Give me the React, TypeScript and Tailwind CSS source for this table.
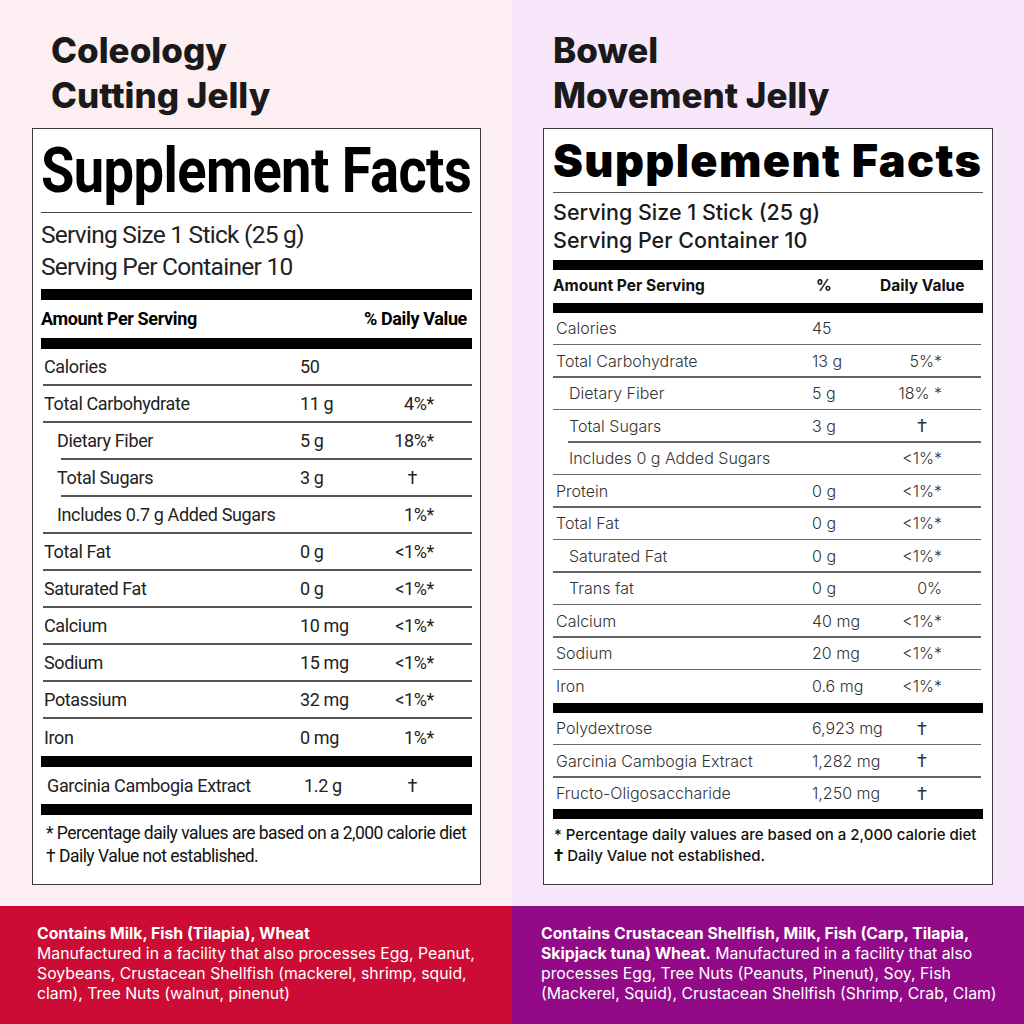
import React from "react";

type Row = { name: string; amount?: string; dv?: string; indent?: boolean; lineIndent?: boolean; last?: boolean };

const leftRows: Row[] = [
  { name: "Calories", amount: "50" },
  { name: "Total Carbohydrate", amount: "11 g", dv: "4%*" },
  { name: "Dietary Fiber", amount: "5 g", dv: "18%*", indent: true, lineIndent: true },
  { name: "Total Sugars", amount: "3 g", dv: "†", indent: true, lineIndent: true },
  { name: "Includes 0.7 g Added Sugars", dv: "1%*", indent: true },
  { name: "Total Fat", amount: "0 g", dv: "<1%*" },
  { name: "Saturated Fat", amount: "0 g", dv: "<1%*" },
  { name: "Calcium", amount: "10 mg", dv: "<1%*" },
  { name: "Sodium", amount: "15 mg", dv: "<1%*" },
  { name: "Potassium", amount: "32 mg", dv: "<1%*" },
  { name: "Iron", amount: "0 mg", dv: "1%*", last: true },
];

const rightRows: Row[] = [
  { name: "Calories", amount: "45" },
  { name: "Total Carbohydrate", amount: "13 g", dv: "5%*" },
  { name: "Dietary Fiber", amount: "5 g", dv: "18% *", indent: true },
  { name: "Total Sugars", amount: "3 g", dv: "†", indent: true, lineIndent: true },
  { name: "Includes 0 g Added Sugars", dv: "<1%*", indent: true },
  { name: "Protein", amount: "0 g", dv: "<1%*" },
  { name: "Total Fat", amount: "0 g", dv: "<1%*" },
  { name: "Saturated Fat", amount: "0 g", dv: "<1%*", indent: true },
  { name: "Trans fat", amount: "0 g", dv: "0%", indent: true },
  { name: "Calcium", amount: "40 mg", dv: "<1%*" },
  { name: "Sodium", amount: "20 mg", dv: "<1%*" },
  { name: "Iron", amount: "0.6 mg", dv: "<1%*", last: true },
];

const rightExtra: Row[] = [
  { name: "Polydextrose", amount: "6,923 mg", dv: "†" },
  { name: "Garcinia Cambogia Extract", amount: "1,282 mg", dv: "†" },
  { name: "Fructo-Oligosaccharide", amount: "1,250 mg", dv: "†", last: true },
];

const roboto = { fontFamily: "Roboto, 'Liberation Sans', sans-serif" };
const inter = { fontFamily: "Inter, 'Liberation Sans', sans-serif" };

function LeftRow({ r }: { r: Row }) {
  return (
    <div className="flex flex-col h-[37px]">
      <div className="flex flex-1 items-center text-[18px] text-[#222] tracking-[-0.02em] whitespace-nowrap">
        <div className={`w-[259px] ${r.indent ? "pl-[16px]" : "pl-[3px]"}`}>{r.name}</div>
        <div className="w-[80px]">{r.amount}</div>
        <div className={`w-[54px] text-right ${r.dv === "†" ? "pr-[17px]" : ""}`}>{r.dv}</div>
      </div>
      {!r.last && <div className={`h-[1.5px] bg-[#555] ${r.lineIndent ? "ml-[20px]" : "ml-[2px]"}`} />}
    </div>
  );
}

function RightRow({ r, h = "h-[32.5px]" }: { r: Row; h?: string }) {
  return (
    <div className={`flex flex-col ${h}`}>
      <div className="flex flex-1 items-center text-[16px] font-light text-[#333] whitespace-nowrap">
        <div className={`w-[259px] ${r.indent ? "pl-[16px]" : "pl-[3px]"}`}>{r.name}</div>
        <div className="w-[76px]">{r.amount}</div>
        {r.dv === "†" ? (
          <div className="w-[54px] text-right pr-[15px] text-[18px] font-normal" style={roboto}>
            †
          </div>
        ) : (
          <div className="w-[54px] text-right">{r.dv}</div>
        )}
      </div>
      {!r.last && <div className={`h-[1.5px] bg-[#666] mr-[2px] ${r.lineIndent ? "ml-[15px]" : ""}`} />}
    </div>
  );
}

function LeftPanel() {
  return (
    <div className="flex flex-col bg-[#fdeff1]">
      <div className="h-[906px] pl-[32px] pr-[31px] pt-[28px]">
        <h2 className="pl-[19px] text-[35px] leading-[45px] font-extrabold text-[#1a1a1a]" style={inter}>
          Coleology
          <br />
          Cutting Jelly
        </h2>
        <div className="mt-[10px] h-[757px] border-[1.5px] border-[#3a3a3a] bg-white px-[8px]" style={roboto}>
          <div className="h-[82.5px] flex items-center">
            <div className="text-[63px] font-bold leading-none text-black whitespace-nowrap origin-left scale-x-[0.86] tracking-[-0.01em]">
              Supplement Facts
            </div>
          </div>
          <div className="h-[1px] bg-[#444]" />
          <div className="pt-[6px] pb-[6px] text-[24.5px] leading-[32px] text-[#222] tracking-[-0.03em]">
            <div>Serving Size 1 Stick (25 g)</div>
            <div>Serving Per Container 10</div>
          </div>
          <div className="h-[11px] bg-black" />
          <div className="h-[38px] flex items-center justify-between text-[18px] font-bold text-black tracking-[-0.02em] pr-[5px]">
            <span>Amount Per Serving</span>
            <span>% Daily Value</span>
          </div>
          <div className="h-[11px] bg-black" />
          {leftRows.map((r) => (
            <LeftRow key={r.name} r={r} />
          ))}
          <div className="h-[11px] bg-black" />
          <div className="h-[37px] flex items-center text-[18px] text-[#222] tracking-[-0.02em]">
            <div className="w-[263px] pl-[6px]">Garcinia Cambogia Extract</div>
            <div className="w-[76px]">1.2 g</div>
            <div className="w-[54px] text-right pr-[17px]">†</div>
          </div>
          <div className="h-[11px] bg-black" />
          <div className="pt-[7px] pl-[5px] text-[17.5px] leading-[23px] text-[#111] tracking-[-0.03em] whitespace-nowrap">
            <div>* Percentage daily values are based on a 2,000 calorie diet</div>
            <div>† Daily Value not established.</div>
          </div>
        </div>
      </div>
      <div className="h-[118px] bg-[#cc0c34] pl-[37px] pt-[18px] text-[15.8px] leading-[20px] text-white whitespace-nowrap" style={inter}>
        <div className="font-bold">Contains Milk, Fish (Tilapia), Wheat</div>
        <div>
          Manufactured in a facility that also processes Egg, Peanut,
          <br />
          Soybeans, Crustacean Shellfish (mackerel, shrimp, squid,
          <br />
          clam), Tree Nuts (walnut, pinenut)
        </div>
      </div>
    </div>
  );
}

function RightPanel() {
  return (
    <div className="flex flex-col bg-[#f8e6fb]">
      <div className="h-[906px] pl-[31px] pr-[31px] pt-[28px]" style={inter}>
        <h2 className="pl-[10px] text-[35px] leading-[45px] font-extrabold text-[#1a1a1a]">
          Bowel
          <br />
          Movement Jelly
        </h2>
        <div className="mt-[10px] h-[757px] border-[1.5px] border-[#3a3a3a] bg-white px-[9px]">
          <div className="h-[62.5px] flex items-center">
            <div className="text-[45px] font-black leading-none text-black whitespace-nowrap tracking-[0.03em]">
              Supplement Facts
            </div>
          </div>
          <div className="h-[1px] bg-[#555]" />
          <div className="pt-[5px] pb-[6px] text-[21.5px] leading-[28px] font-medium text-[#1a1a1a]">
            <div>Serving Size 1 Stick (25 g)</div>
            <div>Serving Per Container 10</div>
          </div>
          <div className="h-[10px] bg-black" />
          <div className="h-[33px] flex items-center text-[15.5px] font-bold text-[#111]">
            <div className="w-[263px]">Amount Per Serving</div>
            <div className="w-[64px]">%</div>
            <div>Daily Value</div>
          </div>
          <div className="h-[10px] bg-black" />
          {rightRows.map((r) => (
            <RightRow key={r.name} r={r} />
          ))}
          <div className="h-[10px] bg-black" />
          <RightRow r={rightExtra[0]} />
          <RightRow r={rightExtra[1]} />
          <RightRow r={rightExtra[2]} h="h-[31.5px]" />
          <div className="h-[10px] bg-black" />
          <div className="pt-[5px] pl-[1px] text-[15px] leading-[21px] font-medium text-[#111] whitespace-nowrap">
            <div>* Percentage daily values are based on a 2,000 calorie diet</div>
            <div>
              <span className="text-[17px] font-bold" style={roboto}>†</span> Daily Value not established.
            </div>
          </div>
        </div>
      </div>
      <div className="h-[118px] bg-[#920a88] pl-[29px] pt-[18px] text-[15.8px] leading-[20px] text-white whitespace-nowrap" style={inter}>
        <span className="font-bold">Contains Crustacean Shellfish, Milk, Fish (Carp, Tilapia,</span>
        <br />
        <span className="font-bold">Skipjack tuna) Wheat.</span> Manufactured in a facility that also
        <br />
        processes Egg, Tree Nuts (Peanuts, Pinenut), Soy, Fish
        <br />
        (Mackerel, Squid), Crustacean Shellfish (Shrimp, Crab, Clam)
      </div>
    </div>
  );
}

export default function App() {
  return (
    <div className="grid grid-cols-2 w-[1024px] h-[1024px] overflow-hidden">
      <LeftPanel />
      <RightPanel />
    </div>
  );
}
